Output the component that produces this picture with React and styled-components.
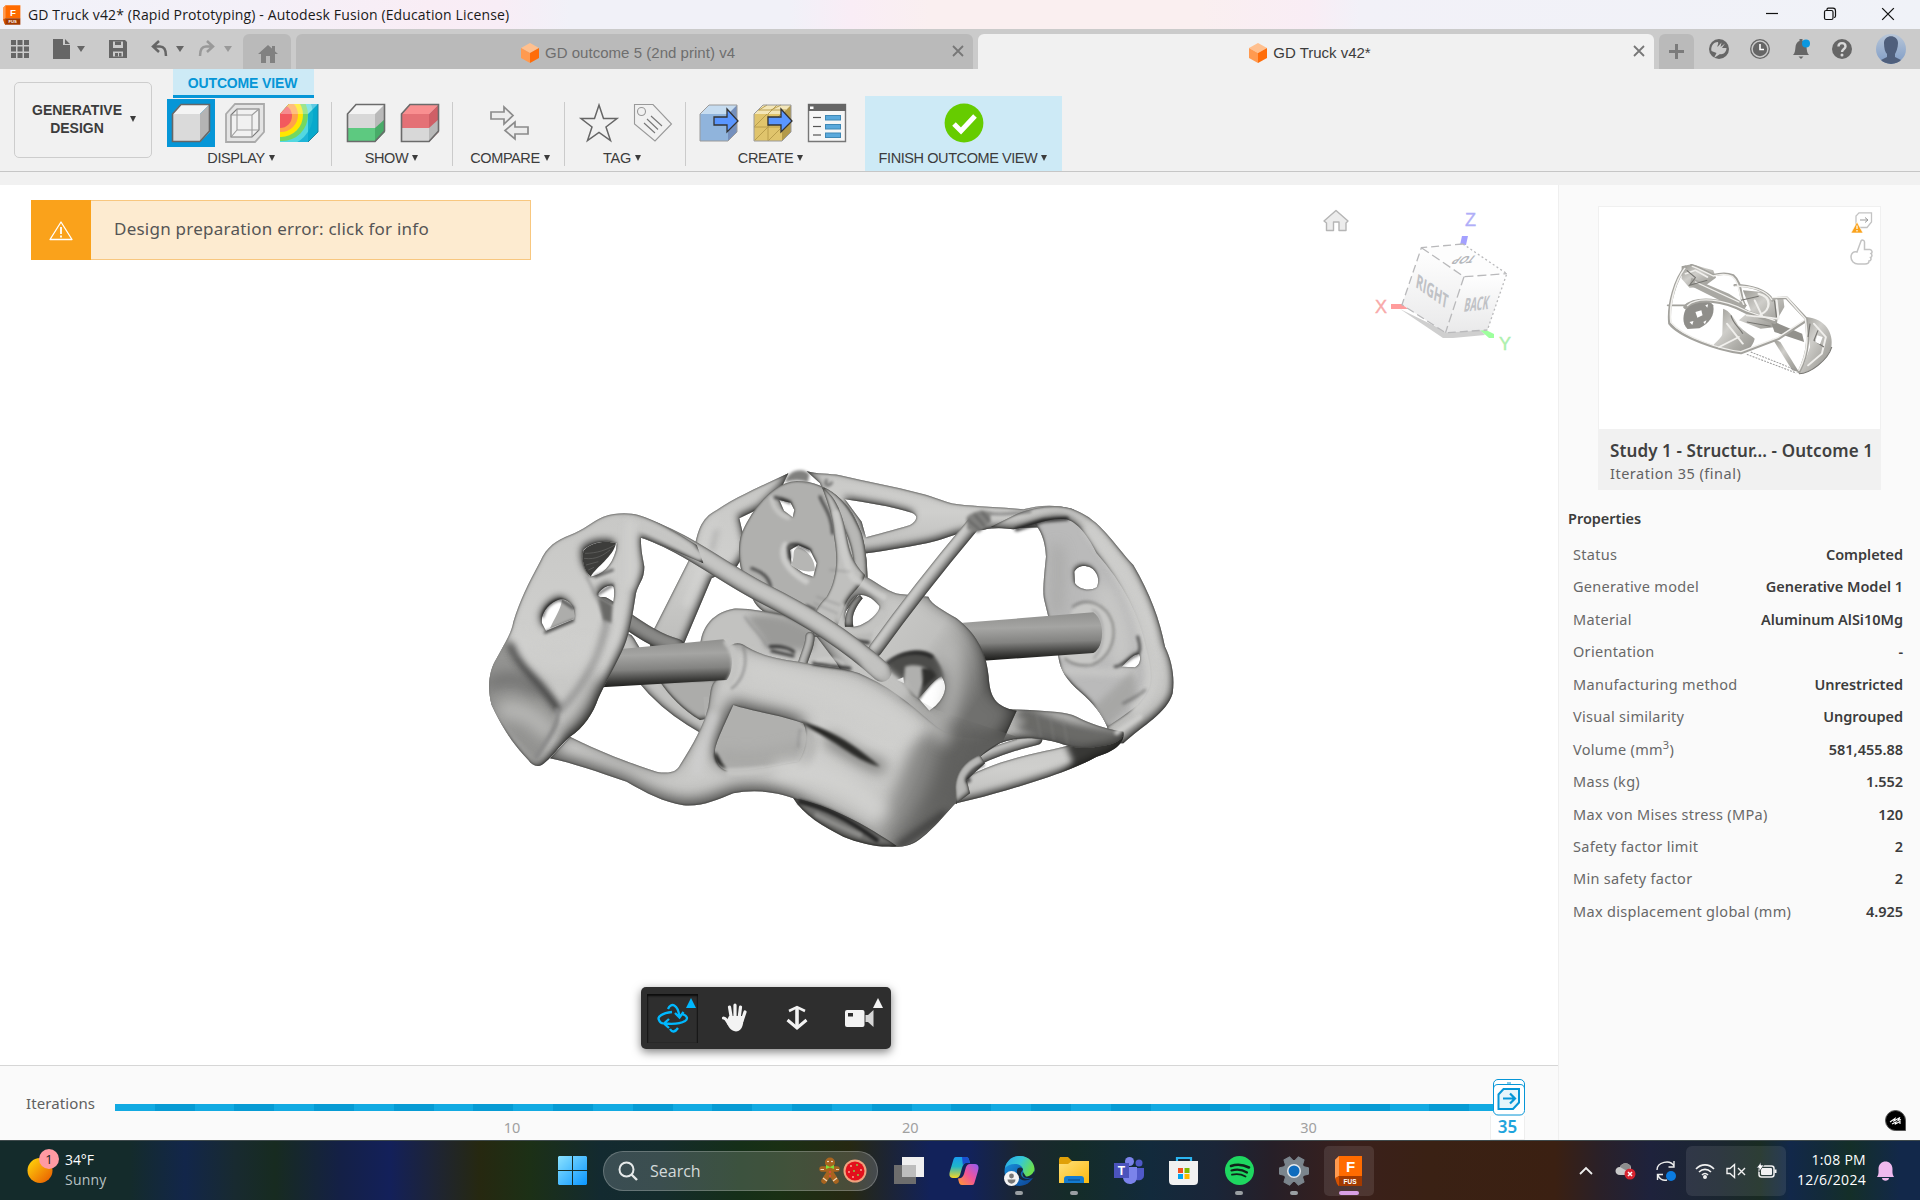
import React from "react";
import styled, { createGlobalStyle } from "styled-components";

const Global = createGlobalStyle`
  * { box-sizing: border-box; }
  body { margin: 0; background: #fff; overflow: hidden; }
  svg { display: block; flex: none; overflow: visible; }
`;

const ui = `"Liberation Sans", Arial, sans-serif`;
const artifakt = `"Noto Sans", "Open Sans", sans-serif`;
const segoe = `"Open Sans", "Noto Sans", sans-serif`;

const Window = styled.div`
  width: 1920px; height: 1200px; display: flex; flex-direction: column;
  background: #fff; font-family: ${ui}; color: #3c3c3c;
`;

/* ---------- title bar ---------- */
const TitleBar = styled.header`
  height: 29px; flex: none; display: flex; align-items: center; padding: 0 25px 0 3px;
  background: linear-gradient(90deg, #f1f2f9 0, #f4f0f8 260px, #f9edf5 430px, #f8edf6 500px, #f1f1f8 570px, #f1f1f8 790px, #f9edf6 850px, #faeff0 930px, #faeff0 1200px, #f9edf5 1310px, #f2f1f8 1360px, #f0f2f8 1920px);
`;
const Title = styled.div`
  margin-left: 7px; flex: 1; font: 14px/20px ${segoe}; letter-spacing: ${p => p.$ls}px; color: #1a1a1a; white-space: nowrap;
`;
const WinButtons = styled.div`display: flex; gap: 44px; align-items: center; padding-bottom: 1px;`;

/* ---------- tab strip ---------- */
const Strip = styled.nav`
  height: 40px; flex: none; background: #cbcbcb; display: flex; padding-top: 5px;
`;
const Quick = styled.div`width: 243px; flex: none; height: 31px; display: flex; align-items: center; padding-left: 11px; padding-bottom: 2px;`;
const Caret = styled.i`
  width: 0; height: 0; flex: none; border: ${p => p.$s || 4}px solid transparent; border-bottom: 0;
  border-top: ${p => p.$h || 6}px solid ${p => p.$c || "#3c3c3c"}; margin-left: ${p => p.$ml || 0}px;
`;
const Gap = styled.span`width: ${p => p.$w}px; flex: none;`;
const Tab = styled.div`
  width: ${p => p.$w}px; margin-right: ${p => p.$mr ?? 5}px; height: 35px; flex: none; border-radius: 6px 6px 0 0;
  display: flex; align-items: center; justify-content: center; padding-top: 2px;
  background: ${p => (p.$active ? "#f1f1f1" : "#bababa")}; color: ${p => (p.$active ? "#3c3c3c" : "#6e6e6e")};
`;
const TabLabel = styled.div`
  flex: 1; display: flex; align-items: center; justify-content: center; gap: 5px; padding-left: ${p => p.$pl}px;
  font-size: 15px; letter-spacing: ${p => p.$ls || 0}px; white-space: nowrap;
`;
const TabClose = styled.div`width: 14px; margin-right: 7px; padding-bottom: 3px;`;
const Tools = styled.div`display: flex; flex: none; align-items: flex-start; gap: 21px; padding: 5px 0 0 15px;`;
const Avatar = styled.div`margin: -5px 0 0 3px;`;

/* ---------- ribbon ---------- */
const Ribbon = styled.section`
  height: 103px; flex: none; background: #f1f1f1; border-bottom: 1px solid #c6c6c6; display: flex; padding-left: 14px;
`;
const UnderRibbon = styled.div`height: 13px; flex: none; background: #f1f1f1;`;
const Workspace = styled.div`
  width: 138px; height: 76px; margin-top: 13px; border: 1px solid #cdcdcd; border-radius: 5px;
  display: flex; align-items: center; justify-content: center; padding: 0 0 2px 2px;
  font-size: 14px; line-height: 18px; font-weight: 700; text-align: center;
`;
const RibbonMain = styled.div`display: flex; flex-direction: column; padding-left: 9px;`;
const RibbonTab = styled.div`
  width: 141px; height: 29px; margin-left: 12px; background: #cdeaf6; border-bottom: 3px solid #0696d7; color: #0696d7;
  font-size: 14px; font-weight: 700; line-height: 28px; text-align: center; letter-spacing: -0.15px; padding-right: 2px;
`;
const Groups = styled.div`display: flex; height: 73px;`;
const Group = styled.div`
  width: ${p => p.$w}px; position: relative; display: flex; flex-direction: column; align-items: center; padding: 1px ${p => p.$pr || 0}px 0 0;
  &::after { content: ""; display: ${p => (p.$last ? "none" : "block")}; position: absolute; right: 0; top: 4px; width: 1px; height: 64px; background: #cbcbcb; }
`;
const IconRow = styled.div`display: flex; gap: 6px;`;
const Slot = styled.div`
  width: 48px; height: 48px; display: flex; align-items: center; justify-content: center;
  background: ${p => (p.$on ? "#0696d7" : "transparent")};
`;
const GroupLabel = styled.div`
  display: flex; align-items: center; gap: 4px; font-size: 14.5px; line-height: 20px; margin-top: 1px; letter-spacing: ${p => p.$ls || 0}px; white-space: nowrap;
  margin-right: ${p => p.$mr || 0}px;
`;
const Finish = styled.div`
  width: 197px; height: 75px; margin: -2px 0 0 4px; padding-top: 3px; background: #cdeaf6;
  display: flex; flex-direction: column; align-items: center;
`;

/* ---------- workspace ---------- */
const Body = styled.div`flex: 1; min-height: 0; display: flex;`;
const Left = styled.div`width: 1558px; display: flex; flex-direction: column;`;
const Viewport = styled.main`position: relative; height: 880px; padding: 265px 0 0 470px; background: #fff;`;
const Alert = styled.div`
  position: absolute; left: 31px; top: 15px; width: 500px; height: 60px; display: flex;
  background: #fdebd0; border: 1px solid #f8c77f; border-left: 0;
`;
const AlertIcon = styled.div`width: 60px; height: 60px; margin: -1px 0; background: #faa21b; display: flex; align-items: center; justify-content: center; padding-top: 2px;`;
const AlertText = styled.div`margin-left: 23px; font: 17px/56px ${artifakt}; letter-spacing: ${p => p.$ls || 0}px; color: #555; white-space: nowrap;`;
const CubeBox = styled.div`position: absolute; left: 1300px; top: 5px;`;
const NavBar = styled.div`
  position: absolute; left: 641px; top: 802px; width: 250px; height: 62px; border-radius: 5px; background: #2e2e2e;
  box-shadow: 0 3px 10px rgba(0,0,0,.5); display: flex; align-items: center; padding: 0 6px;
`;
const NavItem = styled.div`
  width: 51px; height: 49px; margin-right: 11.3px; flex: none; display: flex; align-items: center; justify-content: center; position: relative;
  padding: 0 ${p => p.$pr || 0}px 0 0;
  box-shadow: ${p => (p.$on ? "inset 0 2px 2px #0c0c0c, inset 1px 0 1px #1c1c1c, inset -1px 0 1px #1c1c1c" : "none")};
`;
const Flag = styled.i`
  position: absolute; right: 2px; top: 4px; border: 5px solid transparent; border-top: 0; border-bottom: 10px solid ${p => p.$c};
`;

const Timeline = styled.footer`
  height: 75px; border-top: 1px solid #d6d6d6; background: #fafafa; display: flex; padding-left: 26px;
`;
const TimelineLabel = styled.div`width: 89px; font: 15px/20px ${artifakt}; letter-spacing: ${p => p.$ls || 0}px; color: #606060; padding-top: 27px;`;
const Track = styled.div`position: relative; width: 1394px; padding-top: 38px;`;
const Segments = styled.div`display: flex; height: 7px;`;
const Segment = styled.div`flex: 1; background: ${p => (p.$alt ? "#069bd4" : "#12aae2")};`;
const Ticks = styled.div`display: flex; font: 14.5px/20px ${artifakt}; color: #a0a0a0; padding-top: 6px;`;
const Tick = styled.span`width: 398.3px; text-align: right; position: relative; left: 7px;`;
const Handle = styled.div`position: absolute; left: 1378px; top: 13px;`;
const Current = styled.div`
  position: absolute; left: 1375px; top: 50px; width: 35px; height: 24px; background: #fff; border: 1px solid #eee; border-top: 0;
  font: 600 17px/22px ${artifakt}; color: #1fa4dc; text-align: center;
`;

/* ---------- side panel ---------- */
const Side = styled.aside`
  flex: 1; background: #fafafa; border-left: 1px solid #efefef; display: flex; flex-direction: column; padding: 21px 17px 0 9px;
`;
const Card = styled.div`width: 283px; height: 284px; margin-left: 30px; border: 1px solid #f0f0f0; background: #fff; flex: none;`;
const Thumb = styled.div`height: 222px; position: relative;`;
const Badges = styled.div`position: absolute; right: 7px; top: 5px; display: flex; flex-direction: column; gap: 5px; align-items: flex-end;`;
const CardFoot = styled.div`height: 61px; margin: 0 -1px; background: #f1f1f1; padding: 10px 0 0 12px; font-family: ${artifakt};`;
const CardTitle = styled.div`font-size: 17px; font-weight: 600; line-height: 23px; color: #404040; white-space: nowrap; letter-spacing: ${p => p.$ls || 0}px;`;
const CardSub = styled.div`font-size: 14.5px; line-height: 23px; color: #626262; letter-spacing: ${p => p.$ls || 0}px;`;
const PropTitle = styled.h3`margin: 16px 0 8px; font: 600 14.5px/24px ${artifakt}; color: #3c3c3c; letter-spacing: ${p => p.$ls || 0}px;`;
const PropRow = styled.div`
  height: 32.45px; flex: none; display: flex; justify-content: space-between; padding-left: 5px; font: 14.5px/32px ${artifakt}; white-space: nowrap;
  color: #686868; letter-spacing: 0.3px;
`;
const PropName = styled.span`sup { font-size: 11px; line-height: 0; }`;
const PropValue = styled.span`font-weight: 600; color: #3c3c3c; letter-spacing: -0.02px;`;
const Drop = styled.div`
  width: 21px; height: 21px; margin: auto -3px 9px auto; background: #000; border-radius: 50% 50% 0 50%; border: 1px solid #555;
`;

/* ---------- taskbar ---------- */
const Taskbar = styled.div`
  height: 60px; flex: none; border-top: 1px solid #3f4a4c; display: flex; align-items: center; position: relative; font-family: ${segoe};
  background: linear-gradient(90deg, #142b2b 0, #142b2b 130px, #12264a 185px, #182a30 235px, #172b20 275px, #142046 340px, #13205a 390px, #20252c 445px, #262810 480px, #1c3016 530px, #132a30 600px, #142b2c 660px, #152f18 740px, #1a3014 780px, #262812 850px, #1c2436 890px, #12225a 930px, #12225a 970px, #1b2630 1020px, #142c28 1075px, #122a3c 1150px, #1a2538 1215px, #261f28 1270px, #3a201c 1350px, #3a2114 1430px, #3b2012 1555px, #2a2028 1600px, #1e223c 1650px, #1b2630 1720px, #192b22 1760px, #12284a 1790px, #132a3a 1820px, #142f28 1850px, #12284a 1900px);
`;
const Weather = styled.div`width: 558px; display: flex; align-items: center; padding-left: 26px; gap: 6px;`;
const WeatherText = styled.div`font-size: 14px; line-height: 20px; color: #fff; letter-spacing: -0.1px; padding-bottom: 2px; span { display: block; color: #b9c2c4; letter-spacing: 0.2px; }`;
const SearchBox = styled.div`
  width: 275px; height: 40px; margin: 0 16px; border-radius: 20px; background: rgba(255,255,255,.17); border: 1px solid rgba(255,255,255,.22);
  display: flex; align-items: center; padding: 0 10px 0 14px; font-size: 16px; color: #d3dada; gap: 12px;
`;
const Push = styled.span`flex: 1;`;
const Apps = styled.div`display: flex; gap: 5px; margin-left: -10px;`;
const AppTile = styled.div`
  width: 50px; height: 50px; border-radius: 5px; display: flex; align-items: center; justify-content: center; position: relative;
  background: ${p => (p.$active ? "rgba(255,255,255,.1)" : "transparent")};
  &::after { content: ""; position: absolute; bottom: 1px; width: ${p => p.$bar || 0}px; height: 4px; border-radius: 2px; background: ${p => (p.$active ? "#d9a0e4" : "#9a9fa3")}; }
`;
const Tray = styled.div`display: flex; align-items: center; margin-left: auto; padding-right: 26px;`;
const TrayBox = styled.div`
  width: 100px; height: 50px; border-radius: 6px; background: rgba(255,255,255,.09); display: flex; align-items: center; justify-content: space-around; margin: 0 10px 0 10px; padding: 0 4px;
`;
const Clock = styled.div`width: 70px; font-size: 14px; line-height: 20px; color: #fff; text-align: right; margin-right: 11px; padding-bottom: 2px; white-space: nowrap; letter-spacing: ${p => p.$ls || 0}px;`;

/* ---------- small drawings ---------- */
const OrangeCube = () => (
  <svg width="20" height="22" viewBox="0 0 20 22">
    <path d="M10 1 19 6 10 11 1 6Z" fill="#ffc08f" /><path d="M1 6 10 11V21L1 16Z" fill="#ff9a50" /><path d="M19 6 10 11V21L19 16Z" fill="#ff6d0a" />
  </svg>
);
const Cross = ({ s = 12, c = "#777", w = 1.8 }) => (
  <svg width={s} height={s} viewBox="0 0 12 12"><path d="M1 1 11 11M11 1 1 11" stroke={c} strokeWidth={w} fill="none" /></svg>
);
const FusionLogo = ({ w, h }) => (
  <svg width={w} height={h} viewBox="0 0 28 30">
    <path d="M4 0H27V20H0V4Z" fill="#ff6b00" /><path d="M4 0V20L0 23V4Z" fill="#ff9a4f" /><path d="M4 20H27V30H3V21Z" fill="#a33a00" /><path d="M0 22 4 20V30L2 28Z" fill="#d65200" />
    <text x="15.5" y="16" fontSize="15" fontWeight="700" fontFamily={ui} fill="#fff" textAnchor="middle">F</text>
    <text x="15" y="28" fontSize="6.5" fontWeight="700" fontFamily={ui} fill="#fff" textAnchor="middle">FUS</text>
  </svg>
);

const CubeIcon = ({ front, top, side, edge = "#6b6b6b", children }) => (
  <svg width="40" height="40" viewBox="0 0 40 40">
    <path d="M10 1H39L29 11H1Z" fill={top} /><path d="M1 11H29V39H1Z" fill={front} /><path d="M29 11 39 1V29L29 39Z" fill={side} />
    {children}
    <path d="M1.5 11 10 1.5H38.5V28L29 38.5H1.5Z" fill="none" stroke={edge} strokeWidth="1.6" />
  </svg>
);
const Wireframe = () => (
  <svg width="40" height="40" viewBox="0 0 40 40" fill="none" stroke="#9c9c9c" strokeWidth="1.1">
    <path d="M1 11 10 1H39V29L30 39H1Z" fill="#e4e4e4" strokeWidth="1.8" stroke="#aaa" /><path d="M6 12 12 6H34V27L27 34H6Z" fill="#f1f1f1" stroke="#777" />
    <path d="M6 12H27V34M27 12 34 6M12 6V27H34M12 27 6 34" />
  </svg>
);
const Rainbow = () => (
  <svg width="40" height="40" viewBox="0 0 40 40">
    <defs><clipPath id="rc"><path d="M1 11 10 1H39V29L29 39H1Z" /></clipPath></defs>
    <g clipPath="url(#rc)">
      <path d="M0 0H40V40H0Z" fill="#1db5d8" /><circle cx="3" cy="12" r="31" fill="#53d8e0" /><circle cx="3" cy="12" r="26" fill="#74d860" />
      <circle cx="2" cy="12" r="22" fill="#ffe600" /><circle cx="2" cy="12" r="17" fill="#ffa24a" /><circle cx="1" cy="13" r="12" fill="#f2595e" />
      <path d="M29 11 40 0V40H29Z" fill="#00a6c8" opacity=".75" /><path d="M10 1H39L29 11H1Z" fill="#fff" opacity=".3" />
    </g>
    <path d="M29 39 39 29V1" fill="none" stroke="#23829c" strokeWidth="1" />
  </svg>
);
const Compare = () => (
  <svg width="40" height="40" viewBox="0 0 40 40" fill="#ececec" stroke="#8b8b8b" strokeWidth="1.7">
    <path d="M2 9H15V4L24 12.5 15 21V16H2Z" /><path d="M39 24H26V19L16 27.500 26 36V31H39Z" />
  </svg>
);
const Star = () => (
  <svg width="40" height="40" viewBox="0 0 40 40"><path d="M20 2 24.500 15.500H38L27 24 31.500 37.500 20 29.500 8.500 37.500 13 24 2 15.500H15.500Z" fill="none" stroke="#666" strokeWidth="1.5" /></svg>
);
const TagIcon = () => (
  <svg width="40" height="40" viewBox="0 0 40 40" fill="none" stroke="#999" strokeWidth="1.1">
    <path d="M1.500 1.500H20L38.500 21 22 38 1.500 21Z" /><circle cx="8.500" cy="8.500" r="4" /><path d="M11 20 22 30M14 16 25 26.500M18 13 29 23" stroke="#777" />
  </svg>
);
const BlueArrow = () => <path d="M15 14H28V6L39 18 28 29V22H15Z" fill="#5a96ff" stroke="#333" strokeWidth="1.3" />;
const CreateSolid = () => (
  <svg width="40" height="40" viewBox="0 0 40 40">
    <path d="M1 11 10 2H38L29 11Z" fill="#c6dcf0" /><path d="M1 11H29V38H1Z" fill="#90b4dc" /><path d="M29 11 38 2V29L29 38Z" fill="#7590bd" />
    <path d="M1 11 10 2H38V29L29 38H1Z" fill="none" stroke="#9a9a9a" /><BlueArrow />
  </svg>
);
const CreateMesh = () => (
  <svg width="40" height="40" viewBox="0 0 40 40">
    <path d="M1 11 10 2H38L29 11Z" fill="#f3e6b8" /><path d="M1 11H29V38H1Z" fill="#e0c46c" /><path d="M29 11 38 2V29L29 38Z" fill="#b39a4a" />
    <path d="M1 24H29M15 11V38M1 24 14 11M2 37 15 24 28 11M15 38 29 24M1 11 10 2M15 11 24 2M5 7H33M6 7 14 2M18 7 28 2" fill="none" stroke="#b69a48" strokeWidth=".9" />
    <path d="M1 11 10 2H38V29L29 38H1Z" fill="none" stroke="#9a9a9a" /><BlueArrow />
  </svg>
);
const FormIcon = () => (
  <svg width="40" height="40" viewBox="0 0 40 40">
    <path d="M1.500 1.500H38.500V38.500H1.500Z" fill="#f6f6f6" stroke="#777" strokeWidth="1.4" /><path d="M1 1H39V8H1Z" fill="#666" /><path d="M3 3.500H6.500V6H3Z" fill="#fff" />
    {[13, 22, 30.5].map(y => <g key={y}><path d={`M6 ${y + 1.500}H14`} stroke="#555" strokeWidth="1.2" /><rect x="18.500" y={y - 0.500} width="15" height="4.500" fill="#5aa9dc" stroke="#3f88b5" /></g>)}
  </svg>
);
const CheckIcon = () => (
  <svg width="40" height="40" viewBox="0 0 40 40"><circle cx="20" cy="20" r="19.400" fill="#66cc00" /><path d="M10 21 17 28 31 13" stroke="#fff" strokeWidth="5" fill="none" /></svg>
);

/* ---------- quick access icons ---------- */
const GridIcon = () => (
  <svg width="18" height="18" viewBox="0 0 18 18" fill="#666">{[0, 6.5, 13].map(x => [0, 6.5, 13].map(y => <rect key={x + "-" + y} x={x} y={y} width="5" height="5" />))}</svg>
);
const FileIcon = () => <svg width="17" height="20" viewBox="0 0 17 20"><path d="M0 0H10V6H17V20H0Z M12 0 17 5H12Z" fill="#666" /></svg>;
const SaveIcon = () => (
  <svg width="18" height="18" viewBox="0 0 18 18"><path d="M0 0H16L18 2V18H0Z" fill="#666" /><path d="M4 1.500H14V8H4Z" fill="#cbcbcb" /><path d="M6 1.500H12V5H6Z" fill="#666" /><path d="M4 11.500H14V16.500H4Z" fill="#cbcbcb" /><path d="M6 13H9V16.500H6ZM10 13H12.500V16.500H10Z" fill="#666" /></svg>
);
const UndoIcon = ({ flip, c }) => (
  <svg width="17" height="17" viewBox="0 0 17 17" fill="none" stroke={c} strokeWidth="2.500">
    <g transform={flip ? "translate(17 0) scale(-1 1)" : undefined}><path d="M8 1 2 6.500 8 12M2 6.500H9C13 6.500 15 10 15 16" /></g>
  </svg>
);
const HomeSolid = () => <svg width="22" height="20" viewBox="-2 -2 22 20"><path d="M10 0 20 9H17V18H12V11H8V18H3V9H0Z" fill="#818181" /><path d="M14 1H17V6H14Z" fill="#818181" /></svg>;

/* ---------- orientation cube ---------- */
const ViewCube = () => (
  <svg width="220" height="170" viewBox="1300 190 220 170">
    <defs><linearGradient id="vf" x1="0" y1="0" x2="0" y2="1"><stop offset="0" stopColor="#fff" /><stop offset="1" stopColor="#e9e9ea" /></linearGradient></defs>
    <path d="M1324 221 1336 210.500 1348 221 1346 223V230.500H1339V222H1333.500V230.500H1326.500V223Z" fill="#ececec" stroke="#b5b5b5" strokeWidth="1.400" strokeLinejoin="round" />
    <path d="M1400 309 1443 338H1453L1485 335 1480 329 1445 331Z" fill="#cfcfcf" />
    <path d="M1391 304H1404L1408 309H1391Z" fill="#ff9c9c" /><path d="M1462 236H1468L1466 245H1460Z" fill="#a3a0ff" /><path d="M1480 330H1486L1494 334V338H1489Z" fill="#9dff9d" />
    <path d="M1421.400 247.700 1463 244 1506.800 273.700 1464 276.700Z" fill="#fdfdfd" /><path d="M1421.400 247.700 1464 276.700 1445.500 332.700 1402 304.700Z" fill="url(#vf)" /><path d="M1464 276.700 1506.800 273.700 1487.400 330 1445.500 332.700Z" fill="url(#vf)" />
    <g fill="none" stroke="#b9b9bb" strokeWidth="1.300">
      <path d="M1421.400 247.700 1464 276.700 1506.800 273.700M1464 276.700 1445.500 332.700" strokeDasharray="9 4" /><path d="M1463 244 1506.800 273.700 1487.400 330" strokeDasharray="2 2.500" />
      <path d="M1463 244 1421.400 247.700 1402 304.700 1445.500 332.700 1487.400 330" strokeDasharray="8 4" />
    </g>
    <g fontFamily="Open Sans, sans-serif" fontWeight="700" fontSize="14" fill="#bfc1c5" textAnchor="middle">
      <text transform="matrix(.74 .52 -.22 1.35 1431 298)">RIGHT</text><text transform="matrix(.66 -.07 -.24 1.35 1475.500 310.500)">BACK</text>
      <text transform="matrix(-.75 .05 .62 -.75 1467 256)" fill="#b4b6ba">TOP</text>
    </g>
    <g fontFamily="Liberation Sans, sans-serif" fontSize="18" textAnchor="middle" strokeWidth=".4">
      <text x="1470.500" y="225.500" fill="#b0aef8" stroke="#b0aef8">Z</text><text x="1381" y="312.500" fill="#f8a9a9" stroke="#f8a9a9">X</text><text x="1505" y="349.500" fill="#adf0ad" stroke="#adf0ad">Y</text>
    </g>
  </svg>
);

/* ---------- generated part ---------- */
const S = ({ d, f = "url(#lit)", k = "shade" }) => <path d={d} fill={f} fillRule="evenodd" filter={`url(#${k})`} />;
const Tube = ({ d, w, c = "#cfcfcd", k = "shade", cap = "round" }) => <path d={d} fill="none" stroke={c} strokeWidth={w} strokeLinejoin="round" strokeLinecap={cap} filter={`url(#${k})`} />;
const Soft = ({ d, w, c = "#222", o = 0.6, b = "b10", fill = "none" }) => (
  <path d={d} fill={fill} stroke={fill === "none" ? c : "none"} strokeWidth={w} opacity={o} filter={`url(#${b})`} strokeLinecap="round" strokeLinejoin="round" />
);
const region = { filterUnits: "userSpaceOnUse", x: -80, y: -80, width: 2400, height: 1380, colorInterpolationFilters: "sRGB" };
const ShadeFilter = ({ id, sd, dx, dy, o }) => (
  <filter id={id} {...region}>
    <feComponentTransfer in="SourceAlpha" result="inv"><feFuncA type="table" tableValues="1 0" /></feComponentTransfer>
    <feGaussianBlur in="inv" stdDeviation={sd} /><feOffset dx={dx} dy={dy} result="o" />
    <feFlood floodColor="#181816" floodOpacity={o} /><feComposite in2="o" operator="in" /><feComposite in2="SourceAlpha" operator="in" result="s1" />
    <feGaussianBlur in="inv" stdDeviation="3.500" result="r" /><feFlood floodColor="#20201e" floodOpacity=".9" /><feComposite in2="r" operator="in" /><feComposite in2="SourceAlpha" operator="in" result="s2" />
    <feMerge><feMergeNode in="SourceGraphic" /><feMergeNode in="s1" /><feMergeNode in="s2" /></feMerge>
  </filter>
);
const wing = "M400 200C440 186 480 188 505 195C560 212 610 240 680 285L700 340L530 268L513 262C512 300 518 320 523 350C523 390 505 400 498 430C490 480 480 550 462 590C440 640 405 700 385 745C370 790 340 835 300 860C265 890 245 925 215 945C200 952 185 945 175 930C130 885 95 830 65 765C50 710 58 660 80 625C110 570 125 545 130 515C150 450 175 400 210 335C230 290 260 270 300 255C340 240 365 215 400 200ZM340 300C335 330 340 355 360 380C395 375 425 350 438 300L440 280C400 268 360 280 340 300ZM385 430C400 410 425 400 431 412C435 435 430 455 428 464L385 438ZM216 520C210 490 240 455 270 448C300 445 318 480 312 508L228 543Z";
const plate = "M1690 215C1712 240 1726 270 1728 320C1722 380 1716 430 1724 455L1735 500L1765 620C1770 660 1790 690 1830 725C1870 760 1895 790 1912 832L1990 850L2080 770L2100 640L2040 450L1940 300L1850 210L1780 180ZM1813 365C1825 345 1845 345 1860 352C1885 365 1890 395 1880 412C1860 424 1830 420 1815 400ZM1955 650C1975 630 1990 612 2008 612C2014 630 2008 645 1995 652Z";
const rim = "M1640 192C1700 168 1770 160 1820 182C1890 210 1930 280 1990 345C2040 430 2070 510 2085 590C2105 630 2115 680 2108 730C2090 790 2020 825 1960 880C1940 880 1910 870 1912 830C1970 790 2010 770 2035 720C2050 690 2040 640 2030 600C2010 500 1960 400 1880 310C1860 270 1830 220 1790 208C1730 202 1690 228 1630 238L1560 232Z";
const lowerArm = "M1450 1062L1500 975C1600 925 1700 910 1790 888L1960 850C1965 880 1930 905 1880 920C1800 965 1650 1010 1540 1040Z";
const upperArm = "M1540 750C1560 775 1600 778 1680 780C1740 785 1790 785 1820 800C1860 820 1900 835 1960 845C1965 870 1930 885 1880 890C1830 900 1800 890 1770 880C1720 865 1650 855 1590 880C1540 910 1500 940 1470 990L1380 830Z";
const Model = () => (
  <svg width="740" height="400" viewBox="0 0 2220 1200">
    <defs>
      <linearGradient id="lit" x1="0" y1="0" x2="0" y2="1"><stop offset="0" stopColor="#c8c8c6" /><stop offset=".5" stopColor="#cfcfcd" /><stop offset="1" stopColor="#bdbdbb" /></linearGradient>
      <linearGradient id="rod" x1="0" y1="0" x2=".08" y2="1"><stop offset="0" stopColor="#8b8b89" /><stop offset=".35" stopColor="#a5a5a3" /><stop offset=".65" stopColor="#838381" /><stop offset=".88" stopColor="#3c3c3a" /><stop offset="1" stopColor="#1d1d1b" /></linearGradient>
      <linearGradient id="nose" gradientUnits="userSpaceOnUse" x1="1240" y1="930" x2="1470" y2="1000"><stop offset="0" stopColor="#c2c2c0" /><stop offset=".4" stopColor="#8b8b89" /><stop offset="1" stopColor="#5e5e5c" /></linearGradient>
      <linearGradient id="hump" gradientUnits="userSpaceOnUse" x1="1200" y1="450" x2="1560" y2="700"><stop offset="0" stopColor="#cbcbc9" /><stop offset=".5" stopColor="#c0c0be" /><stop offset="1" stopColor="#70706e" /></linearGradient>
      <ShadeFilter id="shade" sd="11" dx="-5" dy="-10" o=".8" />
      <ShadeFilter id="thin" sd="6" dx="-3" dy="-5" o=".7" />
      <ShadeFilter id="big" sd="22" dx="-5" dy="-14" o=".76" />
      <filter id="b5" {...region}><feGaussianBlur stdDeviation="4" /></filter>
      <filter id="b10" {...region}><feGaussianBlur stdDeviation="10" /></filter>
      <filter id="b20" {...region}><feGaussianBlur stdDeviation="20" /></filter>
      <clipPath id="wc"><path d={wing} clipRule="evenodd" /></clipPath>
      <clipPath id="pc"><path d={plate} clipRule="evenodd" /><path d={rim} /></clipPath>
      <clipPath id="lc"><path d={lowerArm} /></clipPath>
      <clipPath id="uc"><path d={upperArm} /></clipPath>
      <clipPath id="nc"><path d="M790 700L1190 660L1400 780L1640 860C1560 870 1500 940 1480 1000L1465 1050C1420 1095 1380 1150 1330 1175C1290 1198 1250 1190 1200 1165L960 1045L900 900Z" /></clipPath>
    </defs>

    {/* rear frame */}
    <S d="M955 70C880 105 800 140 740 180C690 205 682 250 672 300L548 545L540 590L638 590L725 385L800 350L830 300L808 205L870 175L935 112Z" />
    <Soft d="M735 230C720 300 700 340 650 460" w="26" c="#d6d6d4" o=".6" b="b10" />
    <Soft d="M740 240 725 300" w="10" c="#777" o=".5" b="b10" />
    <S d="M1010 64C1040 72 1080 70 1110 76C1190 95 1270 108 1350 130C1400 142 1430 160 1460 162C1520 170 1590 170 1660 178C1700 168 1750 160 1810 178L1830 230L1720 232C1640 236 1570 230 1540 240C1480 240 1440 262 1400 272C1330 290 1250 300 1190 310L1120 300L1050 100ZM1125 148L1175 215L1188 262C1250 245 1290 235 1320 225C1342 212 1346 196 1325 188C1260 168 1190 158 1125 148Z" />
    <Soft d="M1070 90C1060 105 1075 112 1085 98" w="8" c="#333" o=".6" b="b5" />
    <S k="thin" d="M980 93C900 98 840 190 815 250C798 300 810 370 830 400C845 450 860 475 890 490L1100 520L1192 400C1196 300 1170 200 1115 150C1070 110 1030 93 980 93ZM928 150L962 158L973 180L968 202L942 182ZM985 285L1020 300L1040 340L1030 380L1000 370L965 345L960 300Z" f="#b0b0ae" />
    <path d="M962 345C980 320 960 300 985 292C1015 300 1035 330 1035 362C1010 368 985 362 962 345Z" fill="#b6b6b4" />
    <Soft d="M945 285C927 320 952 362 1008 394" w="18" c="#cfcfcd" o=".9" b="b5" />
    <Soft d="M905 145C910 180 935 198 955 203" w="14" c="#c8c8c6" o=".9" b="b5" />
    <Soft d="M960 285C975 278 1000 290 1020 302M915 142C930 145 945 150 960 158M955 290 960 325M1050 140C1060 170 1085 190 1088 250M845 355C870 365 895 375 902 410M1010 468 1035 480" w="8" c="#222" o=".8" b="b5" />
    <S k="thin" f="#b8b8b6" d="M1060 112C1110 130 1150 190 1175 250C1190 300 1192 360 1192 400L1150 390C1160 310 1130 240 1095 190Z" />

    {/* right wing */}
    <S k="thin" f="#bababa" d={plate} />
    <S d={rim} />
    <g clipPath="url(#pc)">
      <Soft d="M1860 240C1930 320 2010 460 2030 600C2055 680 2050 720 2000 770" w="40" c="#cdcdcb" o=".95" b="b10" />
      <Soft d="M1900 430C1940 500 1960 560 1950 620" w="60" c="#cbcbc9" o=".8" b="b20" />
      <Soft d="M1760 300C1770 350 1760 430 1760 480" w="40" c="#a2a2a0" o=".6" b="b20" />
      <Soft d="M1760 660C1850 668 1900 665 1990 670" w="24" c="#cdcdcb" o=".7" />
      <path d="M1850 790L1990 660L2000 740L1915 830Z" fill="#a3a3a1" opacity=".8" filter="url(#b10)" />
      <Soft d="M1960 760C1990 745 2010 735 2025 720" w="8" c="#444" o=".45" b="b5" />
    </g>
    <Soft d="M2003 560C2012 590 2012 605 2000 615C1980 620 1960 648 1935 650" w="8" c="#222" o=".75" b="b5" />
    <Soft d="M1560 190C1590 195 1640 190 1680 185" w="8" c="#555" o=".6" b="b5" />
    <Soft d="M1640 238 1720 212 1790 206" w="13" c="#1c1c1c" o=".75" b="b5" />
    <path d="M1805 485C1830 450 1900 440 1930 500C1950 560 1925 630 1860 645C1820 650 1780 640 1765 610Z" fill="#c8c8c6" filter="url(#b5)" />
    <Soft d="M1808 470C1850 440 1910 460 1928 520C1940 575 1915 625 1865 645C1830 650 1800 640 1785 625" w="5" c="#4c4c4a" o=".65" b="b5" />
    <Soft d="M1868 480C1900 490 1912 580 1872 625" w="5" c="#888" o=".7" b="b5" />
    <path d="M1460 520L1870 487C1905 510 1905 590 1870 609L1540 632Z" fill="url(#rod)" />

    {/* lower right arms */}
    <Tube d="M1520 930C1580 900 1650 880 1700 868" w="34" />
    <S d={lowerArm} />
    <g clipPath="url(#lc)"><path d="M1785 880L1810 940L1760 990L2000 940L2000 820Z" fill="#1f1f1d" opacity=".85" filter="url(#b10)" /></g>
    <S f="#b4b4b2" d={upperArm} />
    <g clipPath="url(#uc)">
      <Soft d="M1670 810C1740 840 1800 860 1920 875" w="70" c="#4a4a48" o=".7" b="b10" />
      <Soft d="M1500 820C1560 820 1620 810 1650 815" w="30" c="#b4b4b2" o=".6" b="b10" />
      <Soft d="M1700 795 1712 860M1740 800 1752 872M1780 810 1792 880" w="4" c="#8a8a88" o=".5" b="b5" />
    </g>
    <Soft d="M1940 848 2010 800" w="14" c="#d0d0ce" o=".9" b="b5" />

    {/* rear left cross members */}
    <Tube d="M400 465C460 500 540 570 620 590" w="48" c="#8b8b89" />
    <Tube d="M465 580C540 720 640 790 760 850" w="62" c="#c2c2c0" />
    <S f="#acacaa" k="thin" d="M570 695L740 690L740 800L690 810C640 780 600 740 570 695Z" />
    <path d="M700 740C780 740 900 760 1020 810L1060 960L980 980C900 985 820 985 720 975Z" fill="#b0b0ae" />
    <Soft d="M760 920C850 940 920 915 1000 900" w="40" c="#a0a09e" o=".6" b="b20" />
    <Soft d="M990 840 985 890" w="8" c="#888" o=".6" b="b5" />

    {/* centre body */}
    <S d="M690 600C690 540 720 490 790 476C850 474 900 490 940 495L1040 545L1150 600L1140 680L760 720Z" f="#c2c2c0" />
    <path d="M830 500C890 490 960 495 1040 555L1030 600C970 600 930 596 890 596C880 560 850 530 830 500Z" fill="#8d8d8b" opacity=".75" filter="url(#b10)" />
    <Soft d="M825 500C840 530 880 560 890 590" w="5" c="#777" o=".6" b="b5" />
    <S f="url(#hump)" k="big" d="M1150 372C1200 370 1240 425 1290 432L1375 440C1385 465 1420 480 1460 505C1530 560 1550 620 1556 680C1560 740 1575 770 1640 782L1600 870C1540 890 1500 940 1480 1000L1260 920L1100 640L1040 560L1060 470ZM1155 440C1180 425 1210 445 1228 468C1232 490 1180 530 1150 530C1115 520 1120 470 1155 440ZM1345 745C1370 720 1390 690 1414 678C1428 700 1430 720 1415 745C1400 770 1380 780 1378 782Z" />
    <path d="M1056 112C1100 140 1120 200 1130 260C1140 310 1150 340 1185 375C1175 415 1135 430 1120 480L1090 560L1030 560C1020 500 1040 470 1070 440C1100 390 1105 330 1092 260C1090 200 1070 150 1056 112Z" fill="#c0c0be" filter="url(#thin)" />
    <Soft d="M1098 190C1118 260 1118 330 1150 385C1180 400 1200 420 1240 440" w="20" c="#cdcdcb" o=".9" b="b5" />
    <Soft d="M1115 470C1100 510 1110 540 1150 550C1180 552 1210 530 1235 490" w="22" c="#c4c4c2" o=".9" b="b5" />
    <Soft d="M1040 440 1110 465M1032 460 1102 490M1080 360 1140 365" w="4" c="#777" o=".5" b="b5" />
    <path d="M1240 650C1290 600 1350 590 1390 615C1420 650 1430 700 1414 682C1390 690 1370 720 1345 752L1300 700Z" fill="#4c4c4a" filter="url(#b5)" />
    <path d="M1305 650C1340 640 1370 650 1380 670C1360 690 1350 720 1345 750L1300 705Z" fill="#b0b0ae" filter="url(#b5)" />
    <path d="M1355 655C1380 650 1395 665 1400 680C1385 690 1370 700 1360 715Z" fill="#30302e" filter="url(#b5)" />
    <path d="M1280 690 1300 682 1302 700Z" fill="#fff" />
    <Soft d="M1250 640C1290 605 1350 600 1385 620" w="9" c="#1a1a1a" o=".85" b="b5" />
    <Soft d="M1440 600C1470 700 1440 770 1410 850" w="50" c="#c6c6c4" o=".55" b="b20" />
    <S k="thin" f="#9a9a98" d="M1125 530C1120 490 1145 450 1170 435L1178 445C1150 480 1145 500 1150 530Z" />
    <path d="M1090 550C1130 560 1170 555 1210 545L1200 590L1120 590Z" fill="#b9b9b7" filter="url(#b5)" />
    <Soft d="M1150 572 1195 578" w="10" c="#1a1a1a" o=".85" b="b5" />
    <Tube d="M1020 560C1020 590 1005 610 995 650" w="28" k="thin" c="#b9b9b7" />

    <S k="big" d="M740 640C760 600 790 560 830 590C900 630 960 628 1010 640C1070 655 1130 650 1190 680C1280 720 1350 790 1400 830C1470 880 1520 850 1560 870C1500 920 1485 960 1465 1050C1420 1100 1370 1160 1330 1180C1290 1200 1240 1190 1190 1160C1120 1120 1040 1080 970 1045C900 1020 840 1020 790 1030C740 1050 700 1070 640 1066C580 1055 530 1030 470 995C380 965 310 940 240 925L300 860C380 900 480 940 560 965C600 972 620 965 630 945C670 880 700 830 715 770C722 730 720 700 740 690ZM790 765C770 810 740 870 735 900C735 930 745 955 770 962C850 965 920 945 985 935C1010 900 1015 850 1000 820C930 795 850 785 790 765Z" />
    <Soft d="M780 966C860 968 930 950 1010 945" w="24" c="#c6c6c4" o=".95" b="b5" />
    <Soft d="M1000 935C1020 910 1024 880 1012 862" w="40" c="#b8b8b6" o=".95" b="b10" />
    <Soft d="M730 800C710 860 690 910 680 960" w="30" c="#cecece" o=".7" b="b10" />
    <g clipPath="url(#nc)">
      <path d="M1400 820L1330 880C1290 950 1270 1030 1180 1190L1500 1230L1680 860Z" fill="url(#nose)" filter="url(#b20)" />
      <Soft d="M1450 870C1430 980 1400 1080 1290 1180" w="60" c="#4c4c4a" o=".35" b="b20" />
      <Soft d="M1290 1185 1420 1095" w="26" c="#222" o=".5" b="b10" />
      <Soft d="M1330 760C1380 800 1400 830 1420 860" w="50" c="#c4c4c2" o=".6" b="b20" />
    </g>
    <path d="M990 812C1050 830 1130 860 1230 950C1170 935 1130 900 1080 870C1050 850 1020 838 990 812Z" fill="#1a1a18" opacity=".95" filter="url(#b5)" />
    <Soft d="M1080 870C1130 900 1170 930 1230 950" w="36" c="#3c3c3a" o=".6" b="b20" />
    <Soft d="M860 660C980 700 1100 720 1290 830" w="70" c="#d0d0ce" o=".7" b="b20" />
    <Soft d="M940 960C1060 960 1150 1010 1220 1080" w="60" c="#d4d4d2" o=".8" b="b20" />
    <Soft d="M900 590C930 586 960 595 972 606M905 603 970 618M1030 640 1080 648 1140 655" w="8" c="#161616" o=".9" b="b5" />
    <Soft d="M1040 630C1070 625 1090 620 1120 640" w="8" c="#d0d0ce" o=".8" b="b5" />
    <path d="M735 905C748 915 752 935 768 955C745 950 728 930 735 905Z" fill="#2a2a28" filter="url(#b5)" />
    <S k="thin" f="#6f6f6d" d="M970 1045C1050 1060 1150 1100 1280 1188C1230 1195 1170 1180 1120 1160C1060 1130 1000 1095 970 1045Z" />
    <Soft d="M990 1055C1060 1070 1140 1110 1220 1170" w="14" c="#161616" o=".85" b="b5" />
    <Soft d="M1040 1095C1090 1120 1130 1140 1170 1155" w="14" c="#a0a09e" o=".6" b="b5" />
    <S k="thin" f="#b9b9b7" d="M1455 1010C1460 960 1490 930 1530 915L1545 940L1490 990L1500 1030L1458 1062Z" />
    <Soft d="M1500 990C1480 1010 1490 960 1540 945" w="8" c="#1c1c1c" o=".7" b="b5" />

    {/* left axle */}
    <path d="M445 598L760 568C790 590 795 660 770 690L395 712Z" fill="url(#rod)" />
    <Soft d="M820 590C835 640 820 690 785 715" w="6" c="#777" o=".7" b="b5" />
    <Soft d="M772 578C802 610 802 670 778 695" w="22" c="#c4c4c2" o=".95" b="b5" />

    {/* front struts */}
    <Tube d="M1508 225C1420 330 1330 440 1215 600" w="42" />
    <path d="M1490 202C1510 182 1545 176 1563 190L1560 218L1525 248L1492 238Z" fill="#80807e" filter="url(#b5)" />
    <Soft d="M1495 210 1530 240M1515 195 1545 230M1535 185 1560 215" w="4" c="#444" o=".7" b="b5" />
    <Tube d="M500 228C640 268 760 370 880 430C1000 490 1120 560 1235 665" w="60" c="#c6c6c4" />
    <Soft d="M1200 640C1230 670 1260 690 1290 720" w="50" c="#c2c2c0" o=".85" b="b10" />
    <path d="M945 98C950 60 1000 50 1018 72L1014 98C990 88 968 90 945 98Z" fill="#80807e" filter="url(#b5)" />

    {/* left wing */}
    <S k="shade" d={wing} />
    <g clipPath="url(#wc)">
      <Soft d="M120 560C120 640 170 680 210 720C250 760 262 780 262 820L200 950L40 760L60 600Z" fill="#8e8e8c" o=".9" b="b10" />
      <Soft d="M125 590C150 660 215 700 262 775" w="24" c="#222" o=".8" b="b10" />
      <Soft d="M60 700C120 680 150 680 200 720" w="36" c="#555" o=".6" b="b20" />
      <Soft d="M110 780C160 780 190 800 230 840" w="60" c="#b9b9b7" o=".9" b="b20" />
      <Soft d="M410 520C390 620 330 720 280 770" w="20" c="#777" o=".6" b="b10" />
      <Soft d="M262 780C270 830 220 880 200 920" w="14" c="#888" o=".8" b="b5" />
      <Soft d="M160 580C220 640 290 660 340 600" w="60" c="#d0d0ce" o=".6" b="b20" />
      <Soft d="M350 380C380 440 400 480 405 520" w="10" c="#888" o=".5" b="b5" />
      <Soft d="M300 860C350 820 380 760 400 710" w="50" c="#2c2c2a" o=".6" b="b20" />
      <Soft d="M480 225 480 400" w="34" c="#d0d0ce" o=".7" b="b10" />
    </g>
    <Soft d="M520 232C570 250 620 280 690 318" w="26" c="#c6c6c4" o=".95" b="b5" />
    <path d="M340 302C360 280 400 268 438 280C430 320 380 350 362 380C340 360 335 330 340 302Z" fill="#3d3d3b" />
    <path d="M345 310C380 310 410 300 436 284M342 325C380 330 400 315 420 300M348 345 385 335M355 360 372 352" fill="none" stroke="#6c6c6a" strokeWidth="3" opacity=".6" />
    <path d="M240 535C255 500 272 480 276 450C305 450 318 480 312 506Z" fill="#adadab" />
    <path d="M384 440C400 450 415 455 428 466L424 520L400 510Z" fill="#696967" filter="url(#b5)" />
    <Soft d="M375 380 428 360M384 432 428 405M218 500C225 470 245 455 270 448L310 475M225 548 310 512" w="7" c="#1c1c1c" o=".75" b="b5" />
  </svg>
);

const MiniModel = () => (
  <svg width="281" height="222" viewBox="756 50 711 666" preserveAspectRatio="none">
    <defs>
      <linearGradient id="mg" x1="0" y1="0" x2="1" y2="1"><stop offset="0" stopColor="#96958f" /><stop offset=".4" stopColor="#cfceca" /><stop offset=".7" stopColor="#adaca7" /><stop offset="1" stopColor="#94938e" /></linearGradient>
    </defs>
    <g fill="url(#mg)">
      <path d="M965 228 990 222 1045 240 1052 262 1020 290 985 292 965 265Z" /><path d="M978 350C1000 325 1035 325 1045 345C1050 375 1035 400 1010 414L980 416C965 400 968 370 978 350Z" fill="#8f8e8a" />
      <path d="M1070 355C1085 360 1100 385 1108 405C1125 425 1140 435 1150 445C1145 470 1130 485 1115 488L1070 478 1045 465C1055 450 1068 440 1068 430Z" /><path d="M1120 300 1170 305C1195 315 1192 325 1195 330L1222 320 1225 350 1208 385 1205 410 1165 415 1110 390 1140 360Z" />
      <path d="M1280 380C1330 385 1350 430 1344 470C1335 510 1290 550 1262 550L1275 520 1290 470Z" /><path d="M1190 390 1270 430 1275 455 1200 425Z" fill="#92918c" />
      <path d="M1195 445 1215 455 1262 545 1245 540Z" /><path d="M990 262 1085 310 1130 345 1120 365 1070 335 985 285Z" fill="#a9a8a3" />
    </g>
    <g fill="none" stroke="#a3a29d" strokeWidth="8" strokeLinecap="round" strokeLinejoin="round">
      <path d="M975 230C950 265 930 340 935 400C960 440 1060 480 1115 488L1210 445 1275 395" /><path d="M990 225C1010 232 1030 245 1045 255C1060 250 1080 248 1095 255C1120 280 1110 320 1125 345" />
      <path d="M975 350C1000 320 1070 325 1130 365L1200 395" strokeWidth="12" /><path d="M1100 285C1140 285 1180 300 1195 330M1195 325 1230 322 1280 385C1285 430 1290 480 1262 545" /><path d="M930 345H975" strokeWidth="5" />
    </g>
    <g fill="none" stroke="#f0efec" strokeWidth="4" strokeLinecap="round" strokeLinejoin="round">
      <path d="M973 234C950 270 932 340 938 396C970 440 1060 476 1115 484L1208 442 1272 392" /><path d="M992 228C1010 236 1030 248 1045 257C1060 252 1080 251 1093 258C1115 280 1108 315 1122 342" />
      <path d="M980 346C1005 318 1070 325 1130 362L1200 390" /><path d="M1100 288C1140 286 1180 300 1193 328M1195 322 1230 320 1278 385C1283 430 1288 480 1262 540M1000 275 1110 335" />
      <path d="M1300 400 1330 440 1320 490 1285 525M1150 330 1170 380M1080 400 1120 460M1060 470 1110 440M1130 375C1160 380 1190 380 1205 385M975 250 1000 240 1030 260" strokeWidth="5" />
      <path d="M1160 310C1195 320 1190 360 1165 372M1205 330 1210 385" strokeWidth="6" />
    </g>
    <g fill="none" stroke="#777672" strokeWidth="3"><path d="M978 240 1000 262 985 285 1030 270M1310 420 1300 450 1325 470M1200 330 1205 380M1290 400 1285 440M1115 330 1160 318M1345 470C1335 510 1290 550 1262 550M1090 375C1095 400 1110 410 1120 430M1130 395 1190 408" /></g>
    <g fill="#fff"><path d="M1000 365 1015 360 1018 375 1005 382Z" /><path d="M985 395 995 392 992 404Z" /><path d="M1025 345 1032 342 1030 352Z" /><path d="M1020 395 1028 390 1024 402Z" /><path d="M1308 435 1322 440 1315 462 1303 455Z" /></g>
    <path d="M1130 492 1255 548M1140 485 1215 520 1255 540" fill="none" stroke="#999" strokeWidth="3" strokeDasharray="5 3" />
  </svg>
);

const rows = [
  ["Status", "Completed"], ["Generative model", "Generative Model 1"], ["Material", "Aluminum AlSi10Mg"], ["Orientation", "-"],
  ["Manufacturing method", "Unrestricted"], ["Visual similarity", "Ungrouped"], [<>Volume (mm<sup>3</sup>)</>, "581,455.88"], ["Mass (kg)", "1.552"],
  ["Max von Mises stress (MPa)", "120"], ["Safety factor limit", "2"], ["Min safety factor", "2"], ["Max displacement global (mm)", "4.925"],
];

/* ---------- taskbar drawings ---------- */
const Sun = () => (
  <svg width="33" height="36" viewBox="0 0 33 36">
    <defs><linearGradient id="sun" x1="0" y1="0" x2="1" y2="1"><stop offset=".1" stopColor="#ffcf0a" /><stop offset="1" stopColor="#e75500" /></linearGradient></defs>
    <circle cx="14" cy="17.500" r="12.500" fill="url(#sun)" /><circle cx="23" cy="6" r="10" fill="#ff9aa2" />
    <text x="23" y="11" fontSize="13" textAnchor="middle" fill="#222" fontFamily="Open Sans, sans-serif">1</text>
  </svg>
);
const StartIcon = () => (
  <svg width="29" height="29" viewBox="0 0 29 29">
    <defs><linearGradient id="win" x1="0" y1="0" x2="1" y2="1"><stop offset="0" stopColor="#8be2ff" /><stop offset="1" stopColor="#0a96ff" /></linearGradient></defs>
    <path d="M1 0H14V14H0V1ZM15 0H28L29 1V14H15ZM0 15H14V29H1L0 28ZM15 15H29V28L28 29H15Z" fill="url(#win)" />
  </svg>
);
const Ginger = () => (
  <svg width="48" height="28" viewBox="0 0 48 28">
    <g stroke="#a8641f" fill="#a8641f" strokeLinecap="round"><circle cx="11" cy="5.500" r="5" stroke="none" /><path d="M3 12H18M11 12V18M10 16 5 24M12 16 17 24" strokeWidth="5.500" /></g>
    <path d="M5 12.500H1.500M17 12.500H20M4 21 8 24M18 21 14 24" stroke="#f3d7b1" strokeWidth="1.200" /><path d="M7 8 11 10 15 8V12L11 10.500 7 12Z" fill="#7fe03a" />
    <circle cx="11" cy="15" r="1" fill="#e44" /><circle cx="11" cy="19" r="1" fill="#e44" /><circle cx="9" cy="4.500" r=".8" fill="#fff" /><circle cx="13" cy="4.500" r=".8" fill="#fff" />
    <circle cx="36" cy="14" r="11.500" fill="#f0a27e" /><circle cx="36" cy="14" r="9.500" fill="#e3101c" />
    {[[32, 9], [38, 8], [42, 13], [35, 14], [30, 15], [39, 18], [34, 20]].map(([x, y], i) => <circle key={i} cx={x} cy={y} r=".9" fill={i % 2 ? "#7de04b" : "#ffb0a0"} />)}
  </svg>
);
const TaskView = () => (
  <svg width="30" height="30" viewBox="0 0 30 30"><path d="M8 1H30V21H8Z" fill="#f0f0f0" /><path d="M0 9H22V28H0Z" fill="#6d6d6d" /><path d="M8 9H22V21H8Z" fill="#bdbdbd" /></svg>
);
const Copilot = () => (
  <svg width="30" height="28" viewBox="0 0 30 28">
    <defs>
      <linearGradient id="cp1" x1="0" y1="0" x2="0" y2="1"><stop offset="0" stopColor="#1a9cf0" /><stop offset=".45" stopColor="#1fb6c9" /><stop offset="1" stopColor="#f5d824" /></linearGradient>
      <linearGradient id="cp2" x1="1" y1="0" x2="0" y2="1"><stop offset="0" stopColor="#8f5cf5" /><stop offset=".5" stopColor="#f0549a" /><stop offset="1" stopColor="#ff9a2e" /></linearGradient>
    </defs>
    <path d="M7 0H17C20 0 20 3 21 6H17C15 6 14 8 13 11L11 18C10 20 9 21 7 21H4C0 21 0 17 1 14L4 4C5 1 5 0 7 0Z" fill="url(#cp1)" />
    <path d="M13 0H17C20 0 20 3 21 6H17C15 6 14.500 7 14 9Z" fill="#1a4fd0" />
    <path d="M23 28H13C10 28 10 25 9 21.500C12 21.500 14 20 15 17L17 10C18 8 19 7 21 7H26C30 7 30 11 29 14L26 24C25 27 25 28 23 28Z" fill="url(#cp2)" />
  </svg>
);
const EdgeIcon = () => (
  <svg width="31" height="30" viewBox="0 0 31 30">
    <defs>
      <linearGradient id="eg" x1="0" y1="0" x2="1" y2=".4"><stop offset="0" stopColor="#2aa7e8" /><stop offset=".55" stopColor="#35c8d5" /><stop offset="1" stopColor="#6adf50" /></linearGradient>
      <linearGradient id="eb" x1="0" y1="0" x2="1" y2="1"><stop offset="0" stopColor="#1a9be6" /><stop offset="1" stopColor="#0c3f91" /></linearGradient>
    </defs>
    <circle cx="15.500" cy="15" r="15" fill="url(#eb)" /><path d="M1 12C3 4 9 0 16 0C25 0 30.500 7 30.500 13C30.500 18 27 21 22 21C19 21 17 20 19 17C20 12 17 8 11 8C6 8 3 10 1 12Z" fill="url(#eg)" />
    <path d="M19 16C17 20 20 23 29 22C31 20 31 17 30 15C29 18 25 21 22 20.500Z" fill="#15253a" /><path d="M13 14C12 20 16 26 24 24C27 23 28 22 28 22C24 24 18 23 17 19C16 16 19 15 19 13C17 11 14 11 13 14Z" fill="#17283c" />
    <circle cx="7.500" cy="22.500" r="7.500" fill="#f4f4f4" /><circle cx="7.500" cy="20" r="2.400" fill="#777" /><path d="M3.500 23.500H11.500C11.500 29 3.500 29 3.500 23.500Z" fill="#777" />
  </svg>
);
const Folder = () => (
  <svg width="30" height="27" viewBox="0 0 30 27">
    <defs><linearGradient id="fo" x1="0" y1="0" x2="1" y2="1"><stop offset="0" stopColor="#ffe07a" /><stop offset="1" stopColor="#fbb90e" /></linearGradient></defs>
    <path d="M0 2 1 0H9L13 4H29V10H0Z" fill="#e0a008" /><path d="M0 7H9L13 4H30V26H0Z" fill="url(#fo)" /><path d="M5 26V22C5 20 6 19 8 19H22C24 19 25 20 25 22V26Z" fill="#137bd0" /><path d="M9 23H21" stroke="#0c4d8d" strokeWidth="1.200" />
  </svg>
);
const Teams = () => (
  <svg width="30" height="28" viewBox="0 0 30 28">
    <circle cx="25" cy="6" r="3.500" fill="#5059c9" /><path d="M20 11H30V18C30 22 27 24 22 23Z" fill="#5059c9" /><circle cx="15.500" cy="4.500" r="4.500" fill="#7b83eb" /><path d="M9 10H23V20C23 25 19 27 16 27C12 27 9 24 9 20Z" fill="#7b83eb" />
    <path d="M0 6H15V21H0Z" fill="#4b53bc" /><text x="7.500" y="18" fontSize="12" fontWeight="700" fontFamily={ui} fill="#fff" textAnchor="middle">T</text>
  </svg>
);
const Store = () => (
  <svg width="30" height="30" viewBox="0 0 30 30">
    <path d="M8 7V2H22V7" fill="none" stroke="#2bb5f0" strokeWidth="2.200" /><path d="M0 5H29V25C29 28 27 29 25 29H4C2 29 0 28 0 25Z" fill="#f1f1f1" />
    <path d="M9 12H14V17H9Z" fill="#f25022" /><path d="M15.500 12H20.500V17H15.500Z" fill="#7fba00" /><path d="M9 18H14V23H9Z" fill="#00a4ef" /><path d="M15.500 18H20.500V23H15.500Z" fill="#ffb900" />
  </svg>
);
const Spotify = () => (
  <svg width="29" height="29" viewBox="0 0 29 29"><circle cx="14.500" cy="14.500" r="14.500" fill="#1ed760" /><g fill="none" stroke="#10231a" strokeLinecap="round"><path d="M6 10C12 8 19 9 24 11.500" strokeWidth="2.600" /><path d="M6.500 14.500C12 13 18 14 22 16.500" strokeWidth="2.200" /><path d="M7 18.700C12 17.500 17 18.500 20.500 20.500" strokeWidth="1.800" /></g></svg>
);
const Gear = () => (
  <svg width="30" height="30" viewBox="-15 -15 30 30">
    {[30, 90, 150, 210, 270, 330].map(a => <path key={a} d="M-4.500 -9 -3.200 -14.500H3.200L4.500 -9Z" fill="#7b858d" strokeLinejoin="round" stroke="#7b858d" transform={`rotate(${a})`} />)}
    <circle r="11" fill="#7b858d" /><circle r="7" fill="#e6eaee" /><circle r="5.500" fill="#0f6cbd" />
  </svg>
);

export default function App() {
  return (
    <Window>
      <Global />
      <TitleBar>
        <FusionLogo w={18} h={20} />
        <Title $ls={0.13}>GD Truck v42* (Rapid Prototyping) - Autodesk Fusion (Education License)</Title>
        <WinButtons>
          <svg width="14" height="12"><path d="M1 5.500H13" stroke="#111" strokeWidth="1.200" /></svg>
          <svg width="14" height="14" viewBox="0 0 14 14" fill="none" stroke="#111" strokeWidth="1.200"><rect x="1.500" y="3.500" width="8.500" height="9" rx="1.500" /><path d="M4 3V2.500Q4 1.200 5.300 1.200H10Q12.500 1.200 12.500 4V9Q12.500 10.500 11 10.500" /></svg>
          <Cross s={14} c="#111" w={1.1} />
        </WinButtons>
      </TitleBar>

      <Strip>
        <Quick>
          <GridIcon /><Gap $w={24} /><FileIcon /><Caret $ml={7} $c="#666" /><Gap $w={24} /><SaveIcon /><Gap $w={24} />
          <UndoIcon c="#666" /><Caret $ml={8} $c="#666" /><Gap $w={14} /><UndoIcon c="#999" flip /><Caret $ml={9} $c="#999" />
        </Quick>
        <Tab $w={48}><HomeSolid /></Tab>
        <Tab $w={677}><TabLabel $pl={7} $ls={0.03}><OrangeCube />GD outcome 5 (2nd print) v4</TabLabel><TabClose><Cross /></TabClose></Tab>
        <Tab $w={676} $active><TabLabel $pl={8} $ls={-0.02}><OrangeCube />GD Truck v42*</TabLabel><TabClose><Cross /></TabClose></Tab>
        <Tab $w={35} $mr={0}><svg width="17" height="19"><path d="M8.500 1V16M1 8.500H16" stroke="#7b7b7b" strokeWidth="3" /></svg></Tab>
        <Tools>
          <svg width="20" height="20" viewBox="0 0 20 20"><circle cx="10" cy="10" r="10" fill="#666" /><path d="M2.500 12C1.500 8 4 3 9 3C10 5 8 6 8.500 8L12.500 3.500 11.500 8 16 4.500 13 9H17.500C17.500 13 14 16 11 15L5 19 7.500 14Z" fill="#cbcbcb" /></svg>
          <svg width="20" height="20" viewBox="0 0 20 20"><circle cx="10" cy="10" r="9.300" fill="none" stroke="#666" strokeWidth="1.300" /><circle cx="10" cy="10" r="7.200" fill="#666" /><path d="M10 5V10.500H14" fill="none" stroke="#fff" strokeWidth="1.600" /></svg>
          <svg width="20" height="20" viewBox="0 0 20 20"><path d="M2 16C4 14 4 12 4.500 8C5 4 7 2.500 8.500 2V0H11.500V2C14 3 15 5 15.500 8C16 12 16 14 18 16Z" fill="#666" /><path d="M7.500 17.500H12.500L10 20Z" fill="#666" /><circle cx="15" cy="4.500" r="4" fill="#0b98e0" /></svg>
          <svg width="20" height="20" viewBox="0 0 20 20"><circle cx="10" cy="10" r="10" fill="#666" /><path d="M6.500 7.500C6.500 3 13.500 3 13.500 7.500C13.500 10 10 10 10 13" fill="none" stroke="#d8d8d8" strokeWidth="2.400" /><circle cx="10" cy="16" r="1.500" fill="#d8d8d8" /></svg>
          <Avatar><svg width="30" height="30" viewBox="0 0 30 30"><defs><linearGradient id="av" x1="0" y1="0" x2="0" y2="1"><stop offset="0" stopColor="#b8c6d8" /><stop offset="1" stopColor="#7f9cc6" /></linearGradient><clipPath id="avc"><circle cx="15" cy="15" r="15" /></clipPath></defs><circle cx="15" cy="15" r="15" fill="url(#av)" /><g clipPath="url(#avc)" fill="#4f5f7c"><path d="M8 9C8 0 22 0 22 9C22 14 20 18 19 20V23L27 27V30H3V27L11 23V20C9 18 8 14 8 9Z" /></g></svg></Avatar>
        </Tools>
      </Strip>

      <Ribbon>
        <Workspace><span>GENERATIVE<br />DESIGN</span><Caret $ml={8} $s={3.5} /></Workspace>
        <RibbonMain>
          <RibbonTab>OUTCOME VIEW</RibbonTab>
          <Groups>
            <Group $w={171} $pr={4}>
              <IconRow>
                <Slot $on><CubeIcon front="#dadada" top="#f4f4f4" side="#b4b4b4" edge="#666" /></Slot>
                <Slot><Wireframe /></Slot><Slot><Rainbow /></Slot>
              </IconRow>
              <GroupLabel $ls={-0.4} $mr={7}>DISPLAY<Caret $s={3.5} /></GroupLabel>
            </Group>
            <Group $w={121}>
              <IconRow>
                <Slot><CubeIcon front="#d8d8d8" top="#f4f4f4" side="#b9b9b9"><path d="M1 25H29V39H1Z" fill="#5dc980" /><path d="M29 25 39 16V29L29 39Z" fill="#48ac68" /></CubeIcon></Slot>
                <Slot><CubeIcon front="#e47176" top="#f98f90" side="#cf5f66"><path d="M1 25H29V39H1Z" fill="#d8d8d8" /><path d="M29 25 39 16V29L29 39Z" fill="#b9b9b9" /></CubeIcon></Slot>
              </IconRow>
              <GroupLabel $ls={-0.4} $mr={2}>SHOW<Caret $s={3.5} /></GroupLabel>
            </Group>
            <Group $w={112}><IconRow><Slot><Compare /></Slot></IconRow><GroupLabel $ls={-0.4} $mr={-2}>COMPARE<Caret $s={3.5} /></GroupLabel></Group>
            <Group $w={121}><IconRow><Slot><Star /></Slot><Slot><TagIcon /></Slot></IconRow><GroupLabel $ls={-0.25} $mr={7}>TAG<Caret $s={3.5} /></GroupLabel></Group>
            <Group $w={175} $pr={2} $last><IconRow><Slot><CreateSolid /></Slot><Slot><CreateMesh /></Slot><Slot><FormIcon /></Slot></IconRow><GroupLabel $ls={-0.4} $mr={4}>CREATE<Caret $s={3.5} /></GroupLabel></Group>
            <Finish><Slot><CheckIcon /></Slot><GroupLabel $ls={-0.42} $mr={1}>FINISH OUTCOME VIEW<Caret $s={3.5} /></GroupLabel></Finish>
          </Groups>
        </RibbonMain>
      </Ribbon>
      <UnderRibbon />

      <Body>
        <Left>
          <Viewport>
            <Model />
            <Alert>
              <AlertIcon><svg width="24" height="20" viewBox="0 0 24 20" fill="none" stroke="#fff" strokeWidth="1.300"><path d="M12 1 23 18.500H1Z" strokeLinejoin="round" /><path d="M12 6V13M12 14.500V16.500" strokeWidth="1.800" /></svg></AlertIcon>
              <AlertText $ls={0.24}>Design preparation error: click for info</AlertText>
            </Alert>
            <CubeBox><ViewCube /></CubeBox>
            <NavBar>
              <NavItem $on>
                <svg width="32" height="30" viewBox="0 0 32 30" fill="none" stroke="#00b8ff" strokeWidth="2.300"><path d="M11 6C14 -1 21 1 22.500 14M18 10 22.500 14.500 26.500 9M15 9C5 10 0 14 2 17C2.500 19 4 20 6 20.500M25 11C31 13 31 16 28 18C23 21 14 21 8 20.500M12 16 7 20.500 12 25M13 26C15 29.500 18 29.500 21 25" /></svg>
                <Flag $c="#00b8ff" />
              </NavItem>
              <NavItem $pr={2}>
                <svg width="26" height="30" viewBox="0 0 26 30" fill="none" stroke="#f3f3f3" strokeLinecap="round" strokeWidth="3.200"><path d="M8.500 4 10.500 16M14 2.200V15M19.500 4 18 16M24 9 21 18M2.500 15C5 15 6 18 8 21" /><path d="M8 13H22C23 19 22 28 15 28.500C9 28 7 23 5.500 18Z" fill="#f3f3f3" stroke="none" /></svg>
              </NavItem>
              <NavItem><svg width="22" height="26" viewBox="0 0 22 26" fill="none" stroke="#f3f3f3" strokeWidth="3.600"><path d="M11 3V23" /><path d="M3 6 11 2.200 19 6" strokeWidth="2.500" /><path d="M1.500 15 11 23 20.500 15" strokeWidth="3" /></svg></NavItem>
              <NavItem><svg width="29" height="20" viewBox="0 0 29 20"><rect x="0" y="2" width="19.500" height="17" rx="2" fill="#f3f3f3" /><rect x="3" y="5" width="5" height="3.500" fill="#2e2e2e" /><path d="M20.500 7H23L28.500 2V19L23 14H20.500Z" fill="#d6d6d6" /></svg><Flag $c="#f3f3f3" /></NavItem>
            </NavBar>
          </Viewport>
          <Timeline>
            <TimelineLabel $ls={0.1}>Iterations</TimelineLabel>
            <Track>
              <Segments>{Array.from({ length: 35 }, (_, i) => <Segment key={i} $alt={i % 2 === 1} />)}</Segments>
              <Ticks><Tick>10</Tick><Tick>20</Tick><Tick>30</Tick></Ticks>
              <Current>35</Current>
              <Handle>
                <svg width="32" height="37" viewBox="0 0 32 37"><rect x=".5" y=".5" width="31" height="35.500" rx="4.500" fill="#fff" stroke="#0696d7" /><path d="M.5 10Q.5 5.500 5 5.500H27Q31.500 5.500 31.500 10M14 4H18" fill="none" stroke="#0696d7" /><path d="M10.500 10H26V23.500L20 30H5.500V15.500Z" fill="#e6f5fb" stroke="#0696d7" strokeWidth="2" /><path d="M10 19.500H21M17 14.500 22 19.500 17 24.500" fill="none" stroke="#0696d7" strokeWidth="2.200" /></svg>
              </Handle>
            </Track>
          </Timeline>
        </Left>

        <Side>
          <Card>
            <Thumb>
              <MiniModel />
              <Badges>
                <svg width="22" height="22" viewBox="0 0 22 22"><path d="M8 .8H20.500V10L16 15.500H5V4Z" fill="#fff" stroke="#c3c3c3" strokeWidth="1.300" /><path d="M9 8H17M14 5.500 17 8 14 10.500" fill="none" stroke="#999" /><path d="M6 10 12 21H0Z" fill="#faa21b" stroke="#fff" strokeWidth=".6" /><path d="M6 13.500V17M6 18V19.500" stroke="#fff" strokeWidth="1.200" /></svg>
                <svg width="23" height="26" viewBox="0 0 23 26"><path d="M7 13 11 2C12 .5 14.500 1 14.500 3V10.500H20C22.500 11 22.500 14 21 14.500C22.500 16 22 18 20.500 18.500C21.500 20 21 22 19 22C19 24 17 25 15 25H8C4 25 1 22 1 18C1 14 4 12 7 13Z" fill="none" stroke="#c3c3c3" strokeWidth="1.500" /></svg>
              </Badges>
            </Thumb>
            <CardFoot><CardTitle $ls={0.1}>Study 1 - Structur... - Outcome 1</CardTitle><CardSub $ls={0.5}>Iteration 35 (final)</CardSub></CardFoot>
          </Card>
          <PropTitle $ls={-0.02}>Properties</PropTitle>
          {rows.map(([k, v], i) => <PropRow key={i}><PropName>{k}</PropName><PropValue>{v}</PropValue></PropRow>)}
          <Drop><svg width="19" height="19" viewBox="0 0 19 19" stroke="#fff" strokeWidth="1.100" fill="none"><path d="M4 11 9 7.500 8 10 14 6.500 12 9.500 15 8.500M6 13 10 11 9.500 13 14 10.500V13" /></svg></Drop>
        </Side>
      </Body>

      <Taskbar>
        <Weather><Sun /><WeatherText>34°F<span>Sunny</span></WeatherText></Weather>
        <StartIcon />
        <SearchBox>
          <svg width="20" height="20" viewBox="0 0 20 20" fill="none" stroke="#e6eaea" strokeWidth="2"><circle cx="8.500" cy="8.500" r="7" /><path d="M13.500 13.500 19 19" strokeWidth="2.400" /></svg>
          Search<Push /><Ginger />
        </SearchBox>
        <Apps>
          <AppTile><TaskView /></AppTile><AppTile><Copilot /></AppTile><AppTile $bar={8}><EdgeIcon /></AppTile><AppTile $bar={8}><Folder /></AppTile><AppTile><Teams /></AppTile>
          <AppTile><Store /></AppTile><AppTile $bar={8}><Spotify /></AppTile><AppTile $bar={8}><Gear /></AppTile><AppTile $bar={20} $active><FusionLogo w={28} h={30} /></AppTile>
        </Apps>
        <Tray>
          <svg width="14" height="9" viewBox="0 0 14 9"><path d="M1 8 7 2 13 8" fill="none" stroke="#eee" strokeWidth="1.800" /></svg><Gap $w={22} />
          <svg width="21" height="18" viewBox="0 0 21 18"><path d="M5 13C-1 13 -1 5 5 5C7 0 14 0 16 5V13Z" fill="#c9c9c9" /><path d="M5 5C7 0 14 0 16 5L12 9Z" fill="#8d8d8d" /><circle cx="15" cy="12" r="5.500" fill="#d5232f" /><path d="M13 10 17 14M17 10 13 14" stroke="#fff" strokeWidth="1.500" /></svg><Gap $w={20} />
          <svg width="20" height="20" viewBox="0 0 20 20"><path d="M1 9C1 1 14 -2 18 5M18 0V6H12.500M11 19C7 20 3 18 2 14M1.500 19V13.500H7" fill="none" stroke="#eee" strokeWidth="1.400" /><circle cx="15" cy="15" r="5" fill="#0b7be0" /></svg>
          <TrayBox>
            <svg width="20" height="16" viewBox="0 0 20 16" fill="none" stroke="#f2f2f2" strokeWidth="1.600"><path d="M1 6C6 .5 14 .5 19 6M4 9C7.500 5.500 12.500 5.500 16 9M7 12C9 10 11 10 13 12" /><circle cx="10" cy="14" r="1.200" fill="#fff" /></svg>
            <svg width="20" height="16" viewBox="0 0 20 16" fill="none" stroke="#f2f2f2" strokeWidth="1.400"><path d="M1 5.500H4L8.500 1.500V14.500L4 10.500H1ZM12 5 19 12M19 5 12 12" /></svg>
            <svg width="20" height="16" viewBox="0 0 20 16"><rect x="2" y="3" width="15" height="11" rx="2.500" fill="none" stroke="#f2f2f2" strokeWidth="1.500" /><rect x="4" y="5" width="11" height="7" rx="1" fill="#f2f2f2" /><path d="M17.500 6.500H19.500V10H17.500Z" fill="#f2f2f2" /><path d="M4 -1V2H7L2 9V5H-.5Z" fill="#fff" stroke="#25333a" strokeWidth=".7" /></svg>
          </TrayBox>
          <Clock $ls={0.3}>1:08 PM<br />12/6/2024</Clock>
          <svg width="17" height="20" viewBox="0 0 17 20"><path d="M0 16C2 13 1.500 11 1.500 8C1.500 -2 15.500 -2 15.500 8C15.500 11 15 13 17 16ZM5 17H12C12 20.500 5 20.500 5 17Z" fill="#efb9ee" /></svg>
        </Tray>
      </Taskbar>
    </Window>
  );
}
